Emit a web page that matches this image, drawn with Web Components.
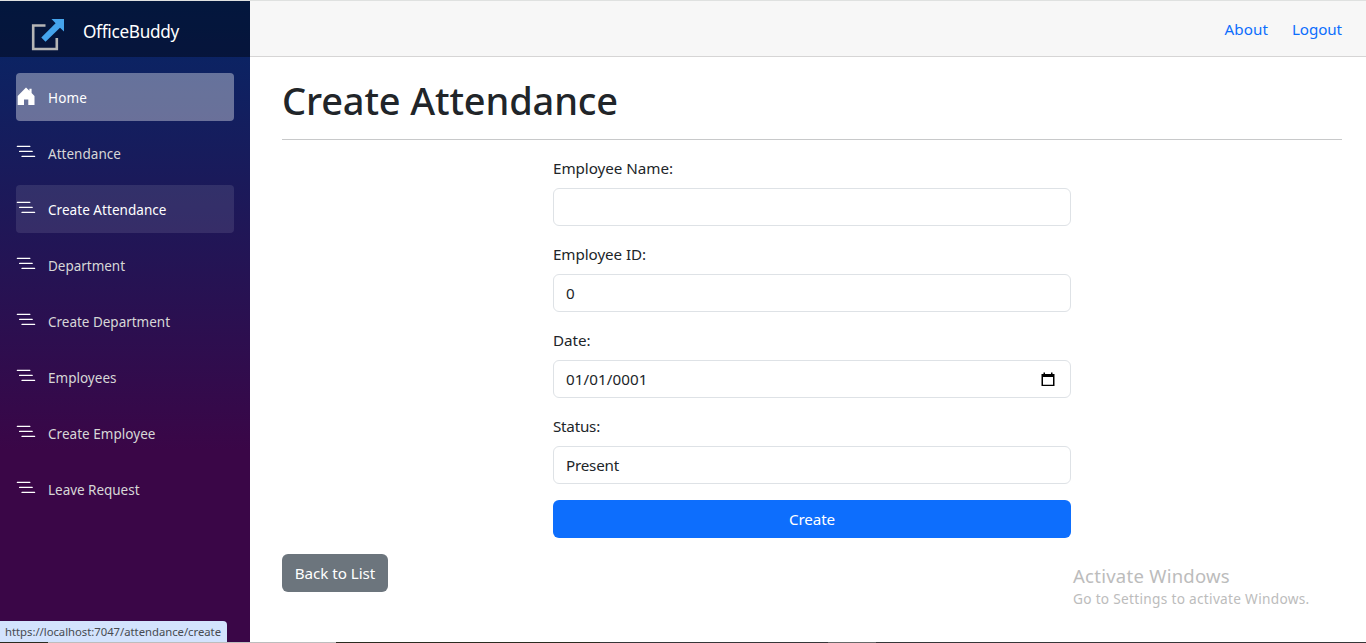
<!DOCTYPE html>
<html lang="en">
<head>
<meta charset="utf-8">
<title>Create Attendance</title>
<style>
html, body { margin: 0; height: 100%; overflow: hidden; background: #fff; }
body { font: 15.2px/24px "Noto Sans", "Open Sans", sans-serif; color: #212529; }
</style>
</head>
<body>
<office-app></office-app>
<script>
const define = (name, html, setup) => customElements.define(name, class extends HTMLElement {
  connectedCallback() {
    if (this.shadowRoot) return;
    const t = document.createElement('template');
    t.innerHTML = html;
    this.attachShadow({ mode: 'open' }).append(t.content.cloneNode(true));
    if (setup) setup.call(this, this.shadowRoot);
  }
});

/* A single line of text whose tracking is adjusted to fill the width in "w". */
define('fit-text', `<style>
:host { display: inline-block; white-space: nowrap; }
span { display: inline-block; }
</style><span><slot></slot></span>`, function (root) {
  const span = root.querySelector('span');
  const w = +this.getAttribute('w');
  const n = this.textContent.length;
  this.style.width = w + 'px';
  span.style.letterSpacing = (w - span.getBoundingClientRect().width) / n + 'px';
});

define('brand-bar', `<style>
:host { display: flex; align-items: center; box-sizing: border-box; height: 56px; padding: 11px 0 0 31px; background: rgba(0,0,0,.4); color: #fff; font-size: 17.2px; }
svg { display: block; width: 34px; height: 34px; margin-right: 18px; }
fit-text { margin-top: -5px; }
</style>
<svg viewBox="0 0 34 34"><path d="M14.500 7.500H2.200V31H25.800V20" fill="none" stroke="#b5b5b5" stroke-width="2.600"/><path d="M20.500 1h12.500v12.500l-4-3.700L14.500 23.700l-4.200-4.200L24.600 5.200z" fill="#45a4ec"/></svg>
<fit-text w="96">OfficeBuddy</fit-text>`);

define('nav-item', `<style>
:host { display: flex; align-items: center; height: 48px; border-radius: 4px; color: #d7d7d7; font-size: 13.5px; }
:host([home]) { background: rgba(255,255,255,.37); color: #fff; }
:host([hover]) { background: rgba(255,255,255,.1); color: #fff; }
svg { width: 20px; height: 20px; margin: -2px 12px 0 0; flex: none; }
fit-text { margin-top: 2px; }
::slotted(fit-text) { margin-top: 2px; }
.house, :host([home]) .lines { display: none; }
:host([home]) .house { display: block; }
</style>
<svg class="house" viewBox="0 0 20 20" fill="#fff"><path d="M10 1.500 13.400 4.800V2.800h2.200v4.200l2.900 3v9h-6.200v-5.500H8V19H1.700V10z"/></svg>
<svg class="lines" viewBox="0 0 20 20" fill="none" stroke="#fff" stroke-width="1.250" stroke-linecap="round"><path d="M1.300 4.300h12.600M3.600 9.400h12.600M6 14.400h12.600"/></svg>
<slot></slot>`);

define('side-bar', `<style>
:host { display: block; width: 250px; height: 642px; flex: none; background: linear-gradient(180deg, rgb(5,39,103) 0%, #3a0647 70%); }
nav { display: grid; gap: 8px; padding: 16px; }
</style>
<brand-bar></brand-bar>
<nav>
<nav-item home><fit-text w="39">Home</fit-text></nav-item>
<nav-item><fit-text w="73">Attendance</fit-text></nav-item>
<nav-item hover><fit-text w="118.500">Create Attendance</fit-text></nav-item>
<nav-item><fit-text w="77">Department</fit-text></nav-item>
<nav-item><fit-text w="122">Create Department</fit-text></nav-item>
<nav-item><fit-text w="68.500">Employees</fit-text></nav-item>
<nav-item><fit-text w="107.500">Create Employee</fit-text></nav-item>
<nav-item><fit-text w="91.500">Leave Request</fit-text></nav-item>
</nav>`);

define('top-bar', `<style>
:host { display: flex; justify-content: flex-end; align-items: center; gap: 24px; box-sizing: border-box; height: 56px; padding: 1px 24px 0 0; background: #f7f7f7; border-bottom: 1px solid #d6d5d5; color: #0d6efd; }
</style>
<fit-text w="43.500">About</fit-text><fit-text w="50">Logout</fit-text>`);

define('form-field', `<style>
:host { display: block; margin-bottom: 16px; }
.label { height: 24px; margin-bottom: 8px; }
.control { display: flex; justify-content: space-between; align-items: center; box-sizing: border-box; height: 38px; padding: 0 15px 0 12px; border: 1px solid #dee2e6; border-radius: 6px; background: #fff; }
</style>
<div class="label"><slot name="label"></slot></div>
<div class="control"><slot></slot><slot name="icon"></slot></div>`);

define('calendar-icon', `<style>:host, svg { display: block; width: 14px; height: 15px; }</style>
<svg viewBox="0 0 14 15"><path d="M2.500 0.500h1.500v1.500h6V.5h1.500V2H13.500V14H.5V2h2zM2 5v7.700h10V5z" fill="#000" fill-rule="evenodd"/></svg>`);

define('bs-button', `<style>
:host { display: flex; align-items: center; justify-content: center; box-sizing: border-box; height: 38px; border-radius: 6px; background: #0d6efd; color: #fff; }
:host([secondary]) { width: 106px; background: #6c757d; }
</style><slot></slot>`);

define('attendance-page', `<style>
:host { display: block; padding: 16px 24px 0 32px; }
h1 { margin: 0; height: 51px; padding-top: 3px; box-sizing: border-box; font-size: 38px; line-height: 48px; font-weight: 500; }
hr { margin: 15px 0 16px; border: 0; border-top: 1px solid #c8c9ca; }
form { width: 518px; margin: 0 auto 16px; }
</style>
<h1><fit-text w="336">Create Attendance</fit-text></h1>
<hr>
<form>
<form-field><fit-text slot="label" w="120">Employee Name:</fit-text></form-field>
<form-field><fit-text slot="label" w="93">Employee ID:</fit-text><fit-text w="9">0</fit-text></form-field>
<form-field><fit-text slot="label" w="37.500">Date:</fit-text><fit-text w="81.500">01/01/0001</fit-text><calendar-icon slot="icon"></calendar-icon></form-field>
<form-field><fit-text slot="label" w="47">Status:</fit-text><fit-text w="53">Present</fit-text></form-field>
<bs-button><fit-text w="46">Create</fit-text></bs-button>
</form>
<bs-button secondary><fit-text w="80.500">Back to List</fit-text></bs-button>`);

define('status-bubble', `<style>
:host { position: absolute; left: 0; bottom: 1px; box-sizing: border-box; width: 227px; height: 21px; padding-left: 5px; border-radius: 0 4px 0 0; background: #d3e3fd; color: #474b50; font-size: 11.3px; line-height: 21px; }
</style><fit-text w="216">https://localhost:7047/attendance/create</fit-text>`);

define('windows-notice', `<style>
:host { position: absolute; left: 1073px; top: 563px; color: #bcbcbc; }
.a { font-size: 18.5px; line-height: 24px; }
.b { font-size: 13.700px; line-height: 20px; margin-top: 1px; }
</style>
<div class="a"><fit-text w="157">Activate Windows</fit-text></div>
<div class="b"><fit-text w="236.500">Go to Settings to activate Windows.</fit-text></div>`);

define('office-app', `<style>
:host { display: block; position: relative; box-sizing: border-box; height: 643px; border-top: 1px solid #dfe1e0; }
.row { display: flex; height: 641px; overflow: hidden; }
main { flex: 1; min-width: 0; }
.edge { height: 1px; background: linear-gradient(90deg, #2b2b20 48px, #bdbdbd 48px 336px, #2b2b20 336px 600px, #363638 600px 828px, #696969 828px 876px, #363638 876px); }
</style>
<div class="row"><side-bar></side-bar><main><top-bar></top-bar><attendance-page></attendance-page></main></div>
<div class="edge"></div>
<status-bubble></status-bubble>
<windows-notice></windows-notice>`);
</script>
</body>
</html>
